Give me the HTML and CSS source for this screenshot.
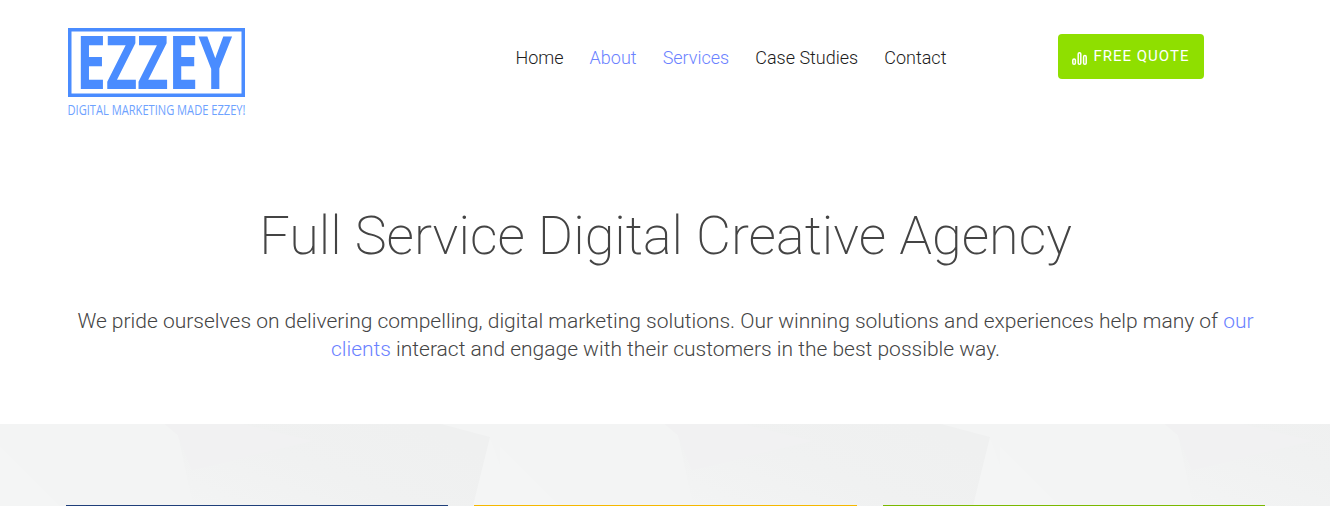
FILE: index.html
```html
<!DOCTYPE html>
<html lang="en">
<head>
<meta charset="utf-8">
<title>Ezzey</title>
<link rel="stylesheet" href="styles.css">
</head>
<body>
<header class="header">
  <a class="logo" href="#" aria-label="Ezzey">
    <svg class="logo-svg" width="180" height="92" viewBox="0 0 180 92">
      <rect class="logo-box" x="2.75" y="3.75" width="173.5" height="65.5"/>
      <text class="logo-word" x="9" y="63" textLength="156" lengthAdjust="spacingAndGlyphs">EZZEY</text>
      <text class="logo-tag" x="0.5" y="88.5" textLength="178" lengthAdjust="spacingAndGlyphs">DIGITAL MARKETING MADE EZZEY!</text>
    </svg>
  </a>
  <nav class="nav">
    <a href="#">Home</a>
    <a href="#" class="accent">About</a>
    <a href="#" class="accent">Services</a>
    <a href="#">Case Studies</a>
    <a href="#">Contact</a>
  </nav>
  <a class="quote" href="#">
    <svg class="quote-icon" width="15" height="13" viewBox="0 0 15 13"><g fill="none" stroke="#fff" stroke-width="1.5"><rect x="0.8" y="7" width="2.6" height="5.2" rx="1.3"/><rect x="6.2" y="0.8" width="2.6" height="11.4" rx="1.3"/><rect x="11.6" y="3.6" width="2.6" height="8.6" rx="1.3"/></g></svg>
    FREE QUOTE
  </a>
</header>
<main class="intro">
  <h1>Full Service Digital Creative Agency</h1>
  <p>We pride ourselves on delivering compelling, digital marketing solutions. Our winning solutions and experiences help many of <a href="#">our clients</a> interact and engage with their customers in the best possible way.</p>
</main>
<section class="band">
  <svg class="band-bg" width="1330" height="82" viewBox="0 0 1330 82" aria-hidden="true">
    <defs>
      <linearGradient id="sheet-fade" x1="0" y1="1" x2="1" y2="0.4">
        <stop offset="0" stop-color="#f3f4f4"/>
        <stop offset="0.55" stop-color="#f0f1f1"/>
        <stop offset="1" stop-color="#eff0f0"/>
      </linearGradient>
      <pattern id="sheets" width="500" height="82" patternUnits="userSpaceOnUse">
        <path fill="#f4f5f5" d="M0 0H500V82H0Z"/>
        <path fill="#f3f4f4" d="M0 0H165L178 11L193 82H60L0 22Z"/>
        <path fill="#f3f4f4" d="M441 0H500V40L490 13Z"/>
        <path fill="url(#sheet-fade)" d="M165 0H441L490 13L473 82H193L178 11Z"/>
        <path fill="#f1f1f2" d="M165 0H244L314 17L192 46L178 11Z"/>
      </pattern>
    </defs>
    <rect width="1330" height="82" fill="url(#sheets)"/>
  </svg>
  <div class="cards">
    <div class="card card-blue"></div>
    <div class="card card-gold"></div>
    <div class="card card-green"></div>
  </div>
</section>
</body>
</html>
```

FILE: styles.css
```css
* { box-sizing: border-box; }
html, body { margin: 0; padding: 0; }
body {
  width: 1330px;
  height: 506px;
  overflow: hidden;
  background: #fff;
  font-family: Roboto, "Liberation Sans", sans-serif;
  font-weight: 300;
  color: #444;
}
a { text-decoration: none; color: inherit; }

.header {
  display: flex;
  align-items: flex-start;
  height: 206px;
  padding: 26px 0 0 67px;
}
.logo { display: block; width: 180px; height: 92px; }
.logo-svg { display: block; overflow: visible; }
.logo-box { fill: none; stroke: #4a8cff; stroke-width: 3.5; }
.logo-word { font-family: "Open Sans", sans-serif; font-weight: 700; font-size: 73px; fill: #4a8cff; }
.logo-tag { font-family: "Open Sans", sans-serif; font-weight: 400; font-size: 15px; fill: #6ea2ff; }

.nav {
  display: flex;
  gap: 26px;
  margin: 21px 0 0 268.5px;
  font-size: 18px;
  line-height: 22px;
  color: #1c1c1c;
}
.nav .accent { color: #6b82ff; }

.quote {
  display: flex;
  align-items: center;
  justify-content: center;
  gap: 6px;
  width: 146px;
  height: 45px;
  margin: 8px 0 0 111.5px;
  padding-bottom: 2px;
  border-radius: 4px;
  background: #8fdf00;
  color: #fff;
  font-size: 15px;
  font-weight: 400;
  letter-spacing: 1px;
}
.quote-icon { margin-top: 5px; }

.intro { height: 218px; padding: 0 66px 0 67px; text-align: center; }
.intro h1 {
  margin: 0;
  font-size: 53.9px;
  line-height: 60px;
  font-weight: 200;
  color: #444;
}
.intro p {
  margin: 41px 0 0;
  font-size: 21px;
  line-height: 28px;
}
.intro p a { color: #6b82ff; }

.band {
  position: relative;
  height: 82px;
  overflow: hidden;
  background: #f4f5f5;
}
.band-bg { position: absolute; left: 0; top: 0; }
.cards {
  position: relative;
  display: flex;
  gap: 26px;
  padding: 81px 65px 0 66px;
}
.card { flex: 1; height: 1px; }
.card-blue { background: #1f3f7a; }
.card-gold { background: #f5b800; }
.card-green { background: #7ab800; }
```
